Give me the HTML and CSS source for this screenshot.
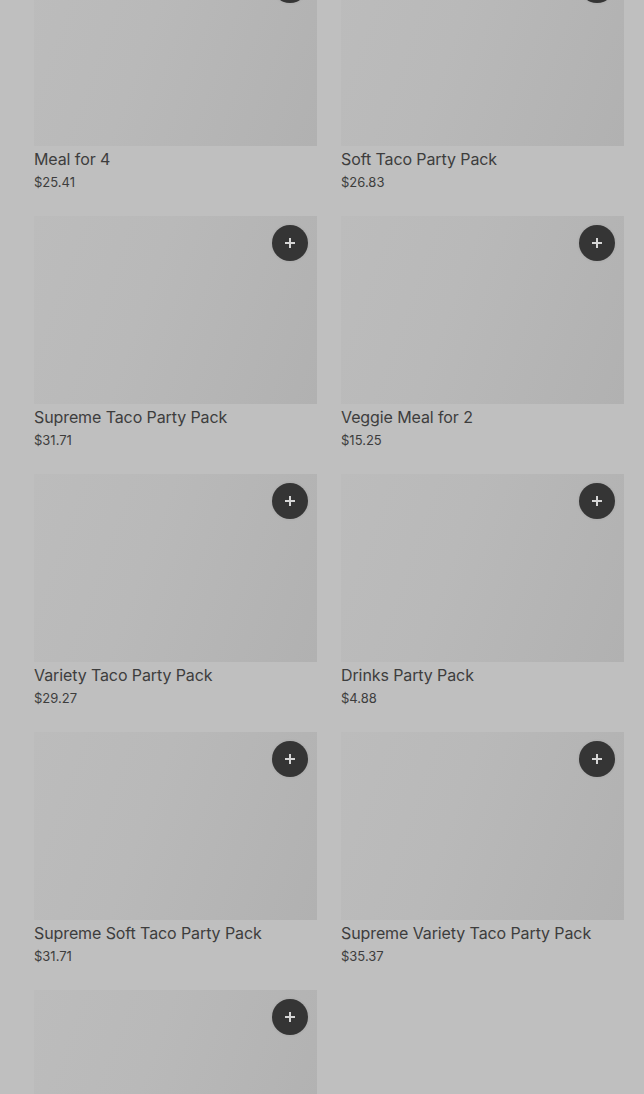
FILE: index.html
```html
<!DOCTYPE html>
<html>
<head>
<meta charset="utf-8">
<link rel="stylesheet" href="styles.css">
</head>
<body>
<div class="grid">
  <div class="card"><div class="img"><button class="add"><svg viewBox="0 0 12 12"><path d="M6 1v10M1 6h10"/></svg></button></div><div class="title">Meal for 4</div><div class="price">$25.41</div></div>
  <div class="card"><div class="img"><button class="add"><svg viewBox="0 0 12 12"><path d="M6 1v10M1 6h10"/></svg></button></div><div class="title">Soft Taco Party Pack</div><div class="price">$26.83</div></div>
  <div class="card"><div class="img"><button class="add"><svg viewBox="0 0 12 12"><path d="M6 1v10M1 6h10"/></svg></button></div><div class="title">Supreme Taco Party Pack</div><div class="price">$31.71</div></div>
  <div class="card"><div class="img"><button class="add"><svg viewBox="0 0 12 12"><path d="M6 1v10M1 6h10"/></svg></button></div><div class="title">Veggie Meal for 2</div><div class="price">$15.25</div></div>
  <div class="card"><div class="img"><button class="add"><svg viewBox="0 0 12 12"><path d="M6 1v10M1 6h10"/></svg></button></div><div class="title">Variety Taco Party Pack</div><div class="price">$29.27</div></div>
  <div class="card"><div class="img"><button class="add"><svg viewBox="0 0 12 12"><path d="M6 1v10M1 6h10"/></svg></button></div><div class="title">Drinks Party Pack</div><div class="price">$4.88</div></div>
  <div class="card"><div class="img"><button class="add"><svg viewBox="0 0 12 12"><path d="M6 1v10M1 6h10"/></svg></button></div><div class="title">Supreme Soft Taco Party Pack</div><div class="price">$31.71</div></div>
  <div class="card"><div class="img"><button class="add"><svg viewBox="0 0 12 12"><path d="M6 1v10M1 6h10"/></svg></button></div><div class="title">Supreme Variety Taco Party Pack</div><div class="price">$35.37</div></div>
  <div class="card"><div class="img"><button class="add"><svg viewBox="0 0 12 12"><path d="M6 1v10M1 6h10"/></svg></button></div></div>
</div>
</body>
</html>
```
FILE: styles.css
```css
html, body {
  margin: 0;
  padding: 0;
  background: #bfbfbf;
  height: 1094px;
  overflow: hidden;
}
body {
  font-family: Inter, Roboto, "Liberation Sans", sans-serif;
  color: #3b3b3b;
}
.grid {
  display: grid;
  grid-template-columns: 283px 283px;
  column-gap: 24px;
  row-gap: 24px;
  padding: 0 20px 0 34px;
  margin-top: -42px;
}
.img {
  position: relative;
  height: 188px;
  background: linear-gradient(110deg, #bcbcbc 0%, #b9b9b9 40%, #b1b1b1 100%);
}
.add {
  position: absolute;
  top: 9px;
  right: 9px;
  width: 36px;
  height: 36px;
  border-radius: 50%;
  border: none;
  padding: 0;
  background: #353535;
  display: flex;
  align-items: center;
  justify-content: center;
  box-shadow: 0 0 3px rgba(0,0,0,0.1);
}
.add svg {
  width: 12px;
  height: 12px;
  stroke: #d6d6d6;
  stroke-width: 2;
  fill: none;
}
.title {
  font-size: 16px;
  line-height: 24px;
  padding-top: 1px;
  font-weight: 400;
  letter-spacing: -0.1px;
  color: #3d3d3d;
}
.price {
  font-size: 13px;
  line-height: 20px;
  padding-top: 1px;
  color: #3d3d3d;
}
```
